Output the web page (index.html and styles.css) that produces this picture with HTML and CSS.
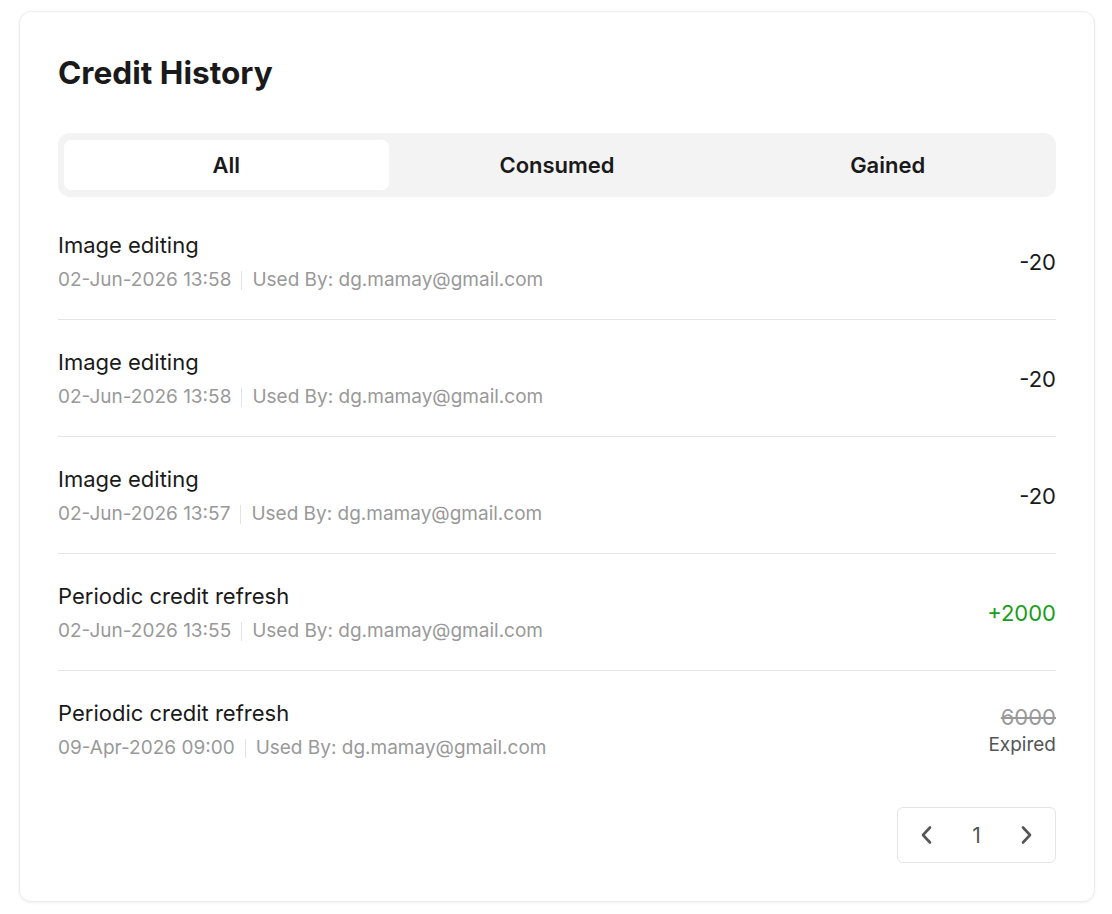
FILE: index.html
```html
<!DOCTYPE html>
<html lang="en">
<head>
  <meta charset="UTF-8">
  <title>Credit History</title>
  <link rel="stylesheet" href="styles.css">
</head>
<body>
  <div class="card">
    <h1 class="title">Credit History</h1>

    <div class="tabs">
      <button class="tab active">All</button>
      <button class="tab">Consumed</button>
      <button class="tab">Gained</button>
    </div>

    <div class="list">
      <div class="row">
        <div class="info">
          <div class="name">Image editing</div>
          <div class="meta"><span>02-Jun-2026 13:58</span><span class="sep"></span><span>Used By: dg.mamay@gmail.com</span></div>
        </div>
        <div class="amount">-20</div>
      </div>

      <div class="row">
        <div class="info">
          <div class="name">Image editing</div>
          <div class="meta"><span>02-Jun-2026 13:58</span><span class="sep"></span><span>Used By: dg.mamay@gmail.com</span></div>
        </div>
        <div class="amount">-20</div>
      </div>

      <div class="row">
        <div class="info">
          <div class="name">Image editing</div>
          <div class="meta"><span>02-Jun-2026 13:57</span><span class="sep"></span><span>Used By: dg.mamay@gmail.com</span></div>
        </div>
        <div class="amount">-20</div>
      </div>

      <div class="row">
        <div class="info">
          <div class="name">Periodic credit refresh</div>
          <div class="meta"><span>02-Jun-2026 13:55</span><span class="sep"></span><span>Used By: dg.mamay@gmail.com</span></div>
        </div>
        <div class="amount gain">+2000</div>
      </div>

      <div class="row">
        <div class="info">
          <div class="name">Periodic credit refresh</div>
          <div class="meta"><span>09-Apr-2026 09:00</span><span class="sep"></span><span>Used By: dg.mamay@gmail.com</span></div>
        </div>
        <div class="amount expired">
          <div class="old">6000</div>
          <div class="status">Expired</div>
        </div>
      </div>
    </div>

    <div class="pager">
      <div class="pagination">
        <button class="page-btn" aria-label="Previous">
          <svg width="18" height="20" viewBox="0 0 18 20"><path d="M12 2.5 5 10l7 7.5" fill="none" stroke="currentColor" stroke-width="2.6" stroke-linecap="round" stroke-linejoin="round"/></svg>
        </button>
        <span class="page-num">1</span>
        <button class="page-btn" aria-label="Next">
          <svg width="18" height="20" viewBox="0 0 18 20"><path d="M6 2.5 13 10l-7 7.5" fill="none" stroke="currentColor" stroke-width="2.6" stroke-linecap="round" stroke-linejoin="round"/></svg>
        </button>
      </div>
    </div>
  </div>
</body>
</html>
```

FILE: styles.css
```css
* {
  box-sizing: border-box;
}

body {
  margin: 0;
  padding: 11px 17px 12px 19px;
  font-family: Inter, 'Noto Sans', sans-serif;
  background: #fff;
  color: #1a1a1a;
}

.card {
  background: #fff;
  border: 1px solid #ececec;
  border-radius: 12px;
  box-shadow: 0 1px 3px rgba(0, 0, 0, 0.06);
  padding: 39px 38px 38px 38px;
}

.title {
  margin: 0 0 38px;
  font-size: 31.6px;
  line-height: 44px;
  font-weight: 700;
}

.tabs {
  display: flex;
  gap: 6px;
  background: #f3f3f3;
  border-radius: 12px;
  padding: 7px 6px;
  margin-bottom: 6px;
}

.tab {
  flex: 1;
  border: none;
  background: transparent;
  border-radius: 7px;
  height: 50px;
  font-family: inherit;
  font-size: 22px;
  font-weight: 600;
  color: #1a1a1a;
  cursor: pointer;
}

.tab.active {
  background: #fff;
}

.row {
  display: flex;
  align-items: center;
  justify-content: space-between;
  padding: 27px 0 26px;
  border-bottom: 1px solid #e6e6e6;
}

.row:last-child {
  border-bottom: none;
}

.name {
  font-size: 22px;
  line-height: 30px;
}

.meta {
  display: flex;
  align-items: center;
  margin-top: 7px;
  font-size: 19px;
  line-height: 26px;
  color: #999;
}

.sep {
  width: 1px;
  height: 19px;
  background: #e3e3e3;
  margin: 0 10px;
}

.amount {
  font-size: 22px;
  text-align: right;
}

.amount.gain {
  color: #1a9e1a;
}

.old {
  color: #999;
  text-decoration: line-through;
  line-height: 30px;
}

.status {
  font-size: 19px;
  line-height: 26px;
  color: #555;
}

.pager {
  display: flex;
  justify-content: flex-end;
  margin-top: 20px;
}

.pagination {
  display: flex;
  align-items: center;
  justify-content: space-between;
  height: 56px;
  width: 159px;
  border: 1px solid #e5e5e5;
  border-radius: 6px;
  padding: 0 13px;
}

.page-btn {
  display: flex;
  align-items: center;
  justify-content: center;
  width: 32px;
  height: 32px;
  border: none;
  background: none;
  color: #555;
  padding: 0;
  cursor: pointer;
}

.page-num {
  font-size: 21px;
  color: #555;
}
```
